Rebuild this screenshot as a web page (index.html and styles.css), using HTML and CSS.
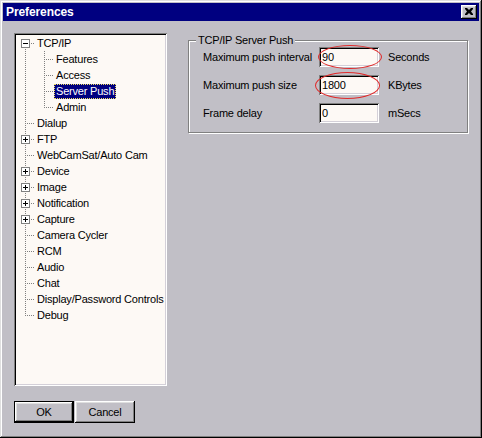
FILE: index.html
```html
<!DOCTYPE html>
<html lang="en">
<head>
  <meta charset="UTF-8">
  <title>Preferences</title>
  <link rel="stylesheet" href="styles.css">
</head>
<body>
  <div class="window">
    <div class="titlebar">
      <span class="title">Preferences</span>
      <button class="close" aria-label="Close">
        <svg width="8" height="7" viewBox="0 0 8 7">
          <path d="M0 0h2l2 2 2-2h2v1l-2 2.5 2 2.5v1h-2l-2-2-2 2h-2v-1l2-2.5-2-2.5z" fill="#000"/>
        </svg>
      </button>
    </div>

    <div class="client">
      <div class="left">
        <div class="tree">
          <div class="row"><span class="c first"><span class="exp"></span></span><span class="label">TCP/IP</span></div>
          <div class="row"><span class="c pipe"></span><span class="c tee"></span><span class="label">Features</span></div>
          <div class="row"><span class="c pipe"></span><span class="c tee"></span><span class="label">Access</span></div>
          <div class="row"><span class="c pipe"></span><span class="c tee"></span><span class="label selected">Server Push</span></div>
          <div class="row"><span class="c pipe"></span><span class="c elbow"></span><span class="label">Admin</span></div>
          <div class="row"><span class="c tee"></span><span class="label">Dialup</span></div>
          <div class="row"><span class="c tee"><span class="exp plus"></span></span><span class="label">FTP</span></div>
          <div class="row"><span class="c tee"></span><span class="label">WebCamSat/Auto Cam</span></div>
          <div class="row"><span class="c tee"><span class="exp plus"></span></span><span class="label">Device</span></div>
          <div class="row"><span class="c tee"><span class="exp plus"></span></span><span class="label">Image</span></div>
          <div class="row"><span class="c tee"><span class="exp plus"></span></span><span class="label">Notification</span></div>
          <div class="row"><span class="c tee"><span class="exp plus"></span></span><span class="label">Capture</span></div>
          <div class="row"><span class="c tee"></span><span class="label">Camera Cycler</span></div>
          <div class="row"><span class="c tee"></span><span class="label">RCM</span></div>
          <div class="row"><span class="c tee"></span><span class="label">Audio</span></div>
          <div class="row"><span class="c tee"></span><span class="label">Chat</span></div>
          <div class="row"><span class="c tee"></span><span class="label">Display/Password Controls</span></div>
          <div class="row"><span class="c elbow"></span><span class="label">Debug</span></div>
        </div>

        <div class="buttons">
          <button class="btn default">OK</button>
          <button class="btn">Cancel</button>
        </div>
      </div>

      <fieldset class="group">
        <legend>TCP/IP Server Push</legend>
        <div class="field">
          <label for="push-interval">Maximum push interval</label>
          <span class="box mark-a"><input type="text" id="push-interval" value="90"></span>
          <span class="unit">Seconds</span>
        </div>
        <div class="field">
          <label for="push-size">Maximum push size</label>
          <span class="box mark-b"><input type="text" id="push-size" value="1800"></span>
          <span class="unit">KBytes</span>
        </div>
        <div class="field">
          <label for="frame-delay">Frame delay</label>
          <span class="box"><input type="text" id="frame-delay" value="0"></span>
          <span class="unit">mSecs</span>
        </div>
      </fieldset>
    </div>
  </div>
</body>
</html>
```

FILE: styles.css
```css
body {
  margin: 0;
  font-family: "Liberation Sans", Arial, sans-serif;
  font-size: 11px;
  letter-spacing: -0.2px;
  color: #000;
  background-color: #c1bfc6;
}

.window {
  width: 482px;
  height: 438px;
  box-sizing: border-box;
  padding: 3px;
  background-color: #c1bfc6;
  box-shadow: inset -1px -1px #000, inset 1px 1px #dfdfdf, inset -2px -2px #808080, inset 2px 2px #fff;
  display: flex;
  flex-direction: column;
}

/* title bar */
.titlebar {
  height: 18px;
  background-color: #000080;
  display: flex;
  align-items: center;
  justify-content: space-between;
  padding: 0 2px 0 3px;
}

.title {
  color: #fff;
  font-weight: bold;
  font-size: 12px;
  letter-spacing: -0.1px;
}

.close {
  width: 16px;
  height: 14px;
  padding: 0;
  border: none;
  background-color: #c1bfc6;
  box-shadow: inset -1px -1px #000, inset 1px 1px #fff, inset -2px -2px #808080, inset 2px 2px #dfdfdf;
  display: flex;
  align-items: center;
  justify-content: center;
}

.close svg {
  display: block;
  margin-top: -1px;
}

/* client area */
.client {
  display: flex;
  padding: 12px 0 0 11px;
}

.left {
  width: 153px;
  display: flex;
  flex-direction: column;
}

/* tree view */
.tree {
  height: 353px;
  box-sizing: border-box;
  padding: 2px 0 0 2px;
  background-color: #fdf9f5;
  box-shadow: inset 1px 1px #808080, inset -1px -1px #fff, inset 2px 2px #000, inset -2px -2px #d4d0d8;
}

.row {
  display: flex;
  height: 16px;
  align-items: center;
}

.c {
  flex: none;
  width: 19px;
  height: 16px;
  display: flex;
  align-items: center;
  background-repeat: no-repeat;
}

.c.pipe {
  background-image: repeating-linear-gradient(to bottom, #808080 0 1px, transparent 1px 2px);
  background-position: 9px 0;
  background-size: 1px 16px;
}

.c.tee {
  background-image:
    repeating-linear-gradient(to bottom, #808080 0 1px, transparent 1px 2px),
    repeating-linear-gradient(to right, #808080 0 1px, transparent 1px 2px);
  background-position: 9px 0, 11px 8px;
  background-size: 1px 16px, 8px 1px;
}

.c.elbow {
  background-image:
    repeating-linear-gradient(to bottom, #808080 0 1px, transparent 1px 2px),
    repeating-linear-gradient(to right, #808080 0 1px, transparent 1px 2px);
  background-position: 9px 0, 11px 8px;
  background-size: 1px 9px, 8px 1px;
}

.c.first {
  background-image:
    repeating-linear-gradient(to bottom, #808080 0 1px, transparent 1px 2px),
    repeating-linear-gradient(to right, #808080 0 1px, transparent 1px 2px);
  background-position: 9px 8px, 11px 8px;
  background-size: 1px 8px, 8px 1px;
}

/* expand / collapse boxes */
.exp {
  width: 9px;
  height: 9px;
  box-sizing: border-box;
  margin-left: 5px;
  border: 1px solid #808080;
  background:
    linear-gradient(#000, #000) center / 5px 1px no-repeat,
    #fff;
}

.exp.plus {
  background:
    linear-gradient(#000, #000) center / 5px 1px no-repeat,
    linear-gradient(#000, #000) center / 1px 5px no-repeat,
    #fff;
}

.label {
  white-space: nowrap;
  height: 15px;
  line-height: 13px;
  box-sizing: border-box;
  padding: 0 1px;
  border: 1px solid transparent;
}

.label.selected {
  background-color: #000080;
  color: #fff;
  border: 1px dotted #f0e060;
}

/* dialog buttons */
.buttons {
  display: flex;
  gap: 1px;
  margin-top: 15px;
}

.btn {
  width: 60px;
  height: 22px;
  padding: 0;
  border: none;
  font-family: inherit;
  font-size: 11px;
  letter-spacing: inherit;
  color: #000;
  background-color: #c1bfc6;
  box-shadow: inset -1px -1px #000, inset 1px 1px #fff, inset -2px -2px #808080, inset 2px 2px #dfdfdf;
}

.btn.default {
  box-shadow: inset 0 0 0 1px #000, inset -2px -2px #000, inset 2px 2px #fff, inset -3px -3px #808080, inset 3px 3px #dfdfdf;
}

/* group box */
.group {
  margin: 0 0 0 21px;
  width: 280px;
  height: 100px;
  box-sizing: border-box;
  padding: 0 0 0 14px;
  border: 1px solid #808080;
  box-shadow: inset 1px 1px #fff, 1px 1px #fff;
  display: flex;
  flex-direction: column;
  gap: 8px;
}

.group legend {
  margin-left: -7px;
  padding: 0 2px;
  line-height: 14px;
  background-color: #c1bfc6;
}

.field {
  display: flex;
  align-items: center;
  height: 20px;
}

.field label {
  width: 116px;
  flex: none;
}

.box {
  position: relative;
  display: block;
}

.box input {
  display: block;
  width: 60px;
  height: 20px;
  box-sizing: border-box;
  margin: 0;
  padding: 0 0 0 3px;
  border: none;
  outline: none;
  font-family: inherit;
  font-size: 11px;
  letter-spacing: inherit;
  color: #000;
  background-color: #fdf9f5;
  box-shadow: inset 1px 1px #808080, inset -1px -1px #fff, inset 2px 2px #000, inset -2px -2px #d4d0d8;
}

/* hand-drawn highlight rings */
.mark-a::after,
.mark-b::after {
  content: "";
  position: absolute;
  border: 1px solid #e02a2a;
  border-radius: 50%;
  pointer-events: none;
}

.mark-a::after {
  top: -2px;
  right: -3px;
  bottom: -2px;
  left: -1px;
}

.mark-b::after {
  top: -3px;
  right: -1px;
  bottom: -4px;
  left: -4px;
}

.unit {
  margin-left: 9px;
}
```
